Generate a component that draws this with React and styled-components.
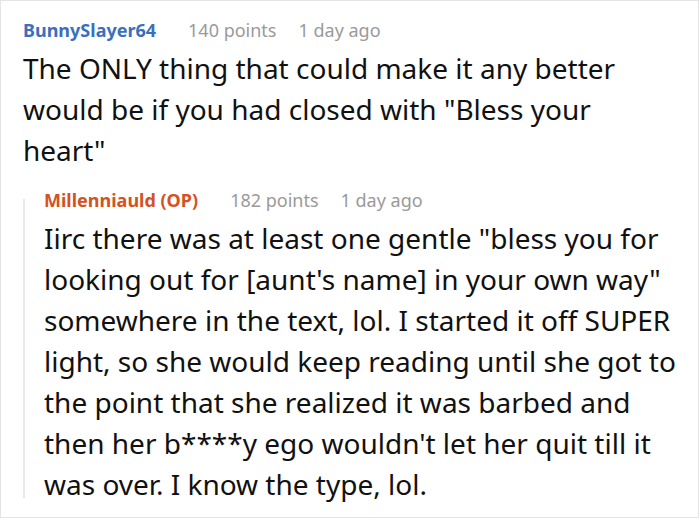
import React from "react";
import styled, { createGlobalStyle } from "styled-components";

const Global = createGlobalStyle`
  html, body { margin: 0; padding: 0; background: #fff; }
  body { font-family: "Noto Sans", "Open Sans", sans-serif; }
`;

const Frame = styled.div`
  box-sizing: border-box;
  width: 699px;
  height: 518px;
  border: 1px solid #e4e4e4;
  padding: 12px 20px 0 22px;
  overflow: hidden;
`;

const Comment = styled.div`
  display: flex;
  flex-direction: column;
`;

const Meta = styled.div`
  display: flex;
  align-items: baseline;
  height: 35px;
  line-height: 35px;
  white-space: nowrap;
`;

const Name = styled.span`
  font-size: 18px;
  font-weight: 700;
  color: ${(p) => (p.$op ? "#d4521f" : "#3b6fbd")};
  margin-right: 32px;
`;

const Info = styled.span`
  font-size: 18px;
  color: #9a9a9a;
  margin-right: 22px;
`;

const Body = styled.p`
  margin: 0;
  font-size: 28px;
  line-height: 41px;
  color: #111;
`;

const Reply = styled.div`
  position: relative;
  margin-top: 12px;
  padding-left: 21px;
  &::before {
    content: "";
    position: absolute;
    left: 0;
    top: 16px;
    bottom: 7px;
    width: 2px;
    background: #e8e8e8;
  }
`;

export default function App() {
  return (
    <>
      <Global />
      <Frame>
        <Comment>
          <Meta>
            <Name>BunnySlayer64</Name>
            <Info>140 points</Info>
            <Info>1 day ago</Info>
          </Meta>
          <Body>
            The ONLY thing that could make it any better would be if you had
            closed with "Bless your heart"
          </Body>
        </Comment>
        <Reply>
          <Comment>
            <Meta>
              <Name $op>Millenniauld (OP)</Name>
              <Info>182 points</Info>
              <Info>1 day ago</Info>
            </Meta>
            <Body>
              Iirc there was at least one gentle "bless you for looking out for
              [aunt's name] in your own way" somewhere in the text, lol. I
              started it off SUPER light, so she would keep reading until she
              got to the point that she realized it was barbed and then her
              b****y ego wouldn't let her quit till it was over. I know the
              type, lol.
            </Body>
          </Comment>
        </Reply>
      </Frame>
    </>
  );
}
